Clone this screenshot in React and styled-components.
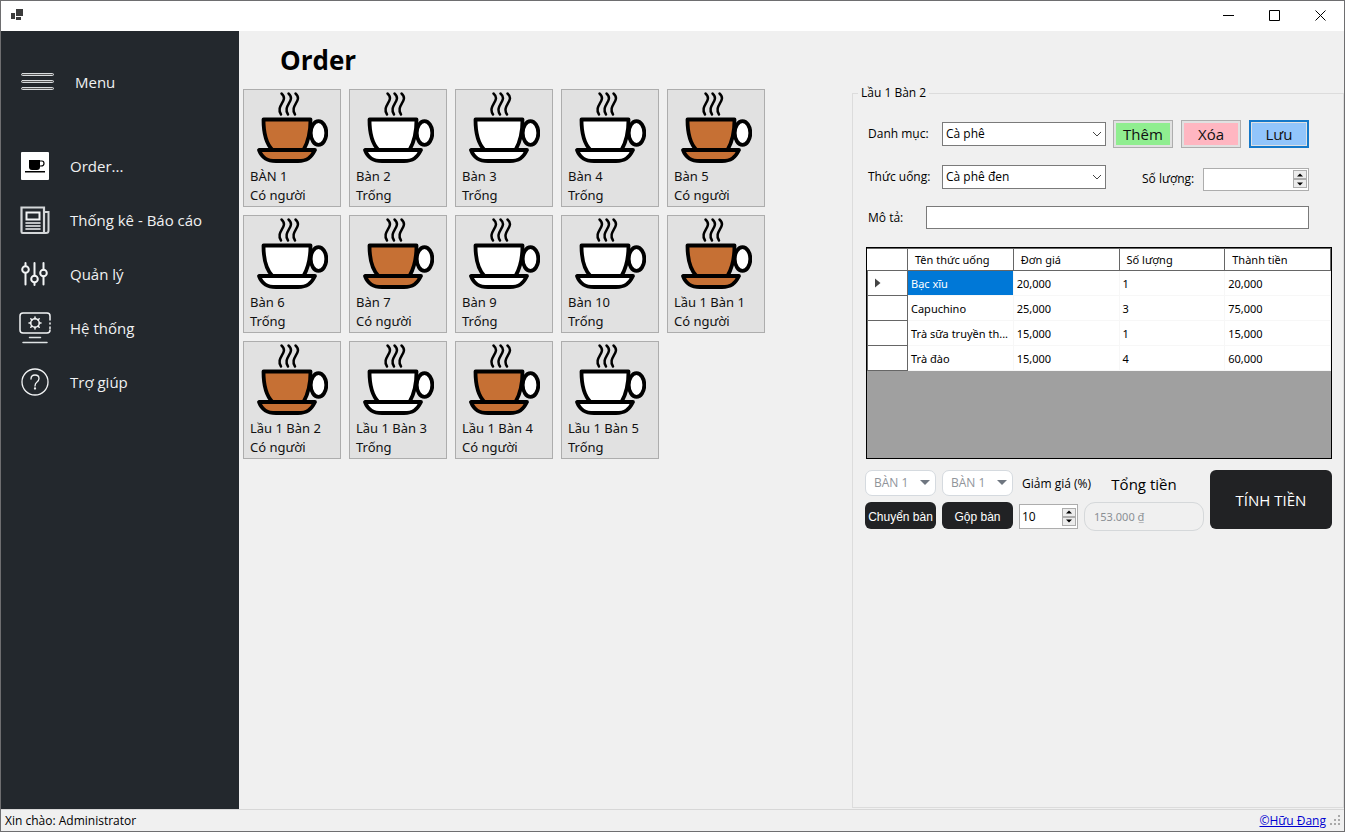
import React from "react";
import styled, { createGlobalStyle, css } from "styled-components";

const Global = createGlobalStyle`
  *, *::before, *::after { box-sizing: border-box; }
  body { margin: 0; background: #f0f0f0; color: #000; font-family: "Open Sans", "Noto Sans", sans-serif; font-size: 12px; }
  button, input, select { font-family: inherit; margin: 0; }
`;

const Window = styled.div`
  display: flex;
  flex-direction: column;
  min-height: 100vh;
  border: 1px solid #6e6e70;
  background: #f0f0f0;
`;

const TitleBar = styled.header`
  display: flex;
  align-items: center;
  justify-content: space-between;
  height: 30px;
  padding-left: 9px;
  background: #fff;
`;

const WindowButtons = styled.div`
  display: flex;
`;

const WindowButton = styled.button`
  display: flex;
  align-items: center;
  justify-content: center;
  width: 46px;
  height: 30px;
  padding: 0 1px 2px 0;
  border: 0;
  background: transparent;
`;

const Body = styled.div`
  display: flex;
  flex: 1;
`;

const Sidebar = styled.nav`
  display: flex;
  flex-direction: column;
  flex: none;
  width: 238px;
  background: #23282d;
`;

const NavButton = styled.button`
  display: flex;
  align-items: center;
  height: ${(p) => (p.$header ? 102 : 54)}px;
  margin-bottom: ${(p) => (p.$header ? 6 : 0)}px;
  padding: 0 0 0 15px;
  gap: ${(p) => (p.$header ? 21 : 16)}px;
  border: 0;
  background: transparent;
  color: #f0f1f2;
  font-size: 15px;
  line-height: 20px;
  svg { width: 38px; height: 38px; flex: none; }
`;

const Main = styled.main`
  flex: 1;
  min-width: 0;
  padding-left: 4px;
`;

const Title = styled.h1`
  height: 58px;
  margin: 0;
  padding-left: 37px;
  font-size: 26px;
  line-height: 58px;
  font-weight: 700;
`;

const TableGrid = styled.div`
  display: flex;
  flex-wrap: wrap;
  gap: 8px;
`;

const TableCard = styled.button`
  display: flex;
  flex-direction: column;
  width: 98px;
  height: 118px;
  padding: 1px 0 0 6px;
  border: 1px solid #adadad;
  background: #e1e1e1;
  text-align: left;
  font-family: "Noto Sans", sans-serif;
  font-size: 13px;
  line-height: 19px;
  color: #111;
  svg { display: block; width: 78px; height: 76px; }
`;

const OrderPanel = styled.fieldset`
  flex: none;
  width: 492px;
  min-width: 0;
  margin: 54px 0 1px;
  padding: 0 0 0 13px;
  border: 1px solid #dcdcdc;
`;

const Legend = styled.legend`
  margin-left: -8px;
  padding: 0 3px;
  line-height: 16px;
`;

const Form = styled.div`
  display: flex;
  flex-direction: column;
  gap: 14px;
  padding: 19px 34px 0 2px;
`;

const FormRow = styled.div`
  display: flex;
  align-items: center;
  height: ${(p) => p.$height}px;
`;

const FieldLabel = styled.label`
  flex: none;
  width: ${(p) => p.$width}px;
  line-height: 18px;
`;

const SelectWrap = styled.div`
  position: relative;
  flex: none;
  width: ${(p) => (p.$round ? 71 : 164)}px;
  svg { position: absolute; right: ${(p) => (p.$round ? 6 : 4)}px; top: 8px; pointer-events: none; }
`;

const Select = styled.select`
  display: block;
  width: 100%;
  height: ${(p) => (p.$round ? 26 : 24)}px;
  padding: 0 ${(p) => (p.$round ? 18 : 20)}px 2px ${(p) => (p.$round ? 8 : 3)}px;
  border: 1px solid ${(p) => (p.$round ? "#d5dadf" : "#7a7a7a")};
  border-radius: ${(p) => (p.$round ? 7 : 0)}px;
  background: #fff;
  color: ${(p) => (p.$round ? "#90949a" : "#000")};
  font-size: 12px;
  opacity: 1;
  appearance: none;
`;

const ActionButtons = styled.div`
  display: flex;
  gap: 8px;
  margin-left: auto;
`;

const ActionButton = styled.button`
  width: 60px;
  height: 28px;
  padding: 0;
  border: ${(p) => (p.$focused ? "2px solid #1478c9" : "1px solid #adadad")};
  box-shadow: inset 0 0 0 ${(p) => (p.$focused ? 1 : 2)}px #e1e1e1;
  background: ${(p) => p.$color};
  color: #111;
  font-size: 15px;
  line-height: 20px;
`;

const QuantityField = styled.div`
  display: flex;
  align-items: center;
  margin-left: auto;
  padding-top: 4px;
`;

const Spinner = styled.div`
  display: flex;
  align-items: center;
  flex: none;
  width: ${(p) => p.$width}px;
  height: ${(p) => p.$height}px;
  padding: 1px;
  border: 1px solid #adadad;
  background: #fff;
`;

const SpinnerInput = styled.input`
  flex: 1;
  min-width: 0;
  height: 18px;
  padding: 0 1px;
  border: 0;
  background: transparent;
  font-size: 12px;
  appearance: textfield;
  &::-webkit-inner-spin-button { appearance: none; margin: 0; }
`;

const SpinnerArrows = styled.div`
  display: flex;
  flex-direction: column;
  width: 14px;
`;

const SpinnerArrow = styled.button`
  display: flex;
  align-items: center;
  justify-content: center;
  width: 14px;
  height: 9px;
  padding: 0;
  border: 1px solid #adadad;
  background: #ececec;
`;

const NoteInput = styled.input`
  flex: 1;
  min-width: 0;
  height: 23px;
  padding: 0 4px;
  border: 1px solid #7a7a7a;
  background: #fff;
  font-size: 12px;
`;

const GridBox = styled.div`
  width: 466px;
  height: 212px;
  margin-top: 18px;
  border: 1px solid #000;
  background: #a0a0a0;
`;

const OrderTable = styled.table`
  width: 100%;
  table-layout: fixed;
  border-collapse: separate;
  border-spacing: 0;
  background: #fff;
  font-family: "Noto Sans", sans-serif;
  font-size: 11px;
  line-height: 16px;
`;

const HeadCell = styled.th`
  height: 23px;
  padding: 0 0 0 7px;
  border: solid #666;
  border-width: 1px 1px 1px 0;
  font-weight: 400;
  text-align: left;
  width: ${(p) => (p.$marker ? "41px" : "auto")};
`;

const RowMarker = styled.th`
  height: 25px;
  padding: 0 0 0 7px;
  border: solid #666;
  border-width: 0 1px 1px 1px;
  svg { display: block; }
`;

const Cell = styled.td`
  height: 25px;
  padding: 1px 0 0 3px;
  border: solid #f7f7f7;
  border-width: 0 1px 1px 0;
  white-space: nowrap;
  ${(p) =>
    p.$selected &&
    css`
      background: #0078d7;
      color: #fff;
    `}
`;

const Checkout = styled.div`
  display: grid;
  grid-template-columns: 71px 71px 59px 120px 122px;
  grid-template-rows: 26px 27px;
  gap: 6px;
  margin: 11px 0 0 -1px;
`;

const DarkButton = styled.button`
  padding: 0;
  border: 0;
  border-radius: 6px;
  background: #212224;
  color: #fff;
  white-space: nowrap;
  font-size: ${(p) => (p.$large ? 15 : 12)}px;
  ${(p) => p.$large ? css`grid-column: 5; grid-row: 1 / 3;` : css`font-family: "Liberation Sans", sans-serif; padding-top: 3px;`}
`;

const CheckoutLabel = styled.label`
  white-space: nowrap;
  padding-left: ${(p) => (p.$large ? 0 : 3)}px;
  text-align: ${(p) => (p.$large ? "center" : "left")};
  font-size: ${(p) => (p.$large ? 15 : 12)}px;
  line-height: 28px;
`;

const DiscountCell = styled.div`
  padding-top: 2px;
`;

const TotalInput = styled.input`
  width: 100%;
  height: 29px;
  padding: 0 9px;
  border: 1px solid #d5d8da;
  border-radius: 11px;
  background: #f0f0f0;
  color: #8a8f94;
  font-family: "Noto Sans", sans-serif;
  font-size: 11px;
`;

const StatusBar = styled.footer`
  display: flex;
  align-items: center;
  justify-content: space-between;
  height: 22px;
  padding: 0 2px 0 4px;
  border-top: 1px solid #d7d7d7;
`;

const StatusRight = styled.div`
  display: flex;
  align-items: center;
  gap: 4px;
`;

const AuthorLink = styled.a`
  color: #0000d0;
  text-decoration: underline;
`;

function AppLogo() {
  return (
    <svg width="16" height="14" viewBox="0 0 16 14" fill="#3b3b3b" aria-hidden="true">
      <rect x="6" y="0" width="7" height="7" />
      <rect x="1" y="4" width="4" height="6" />
      <rect x="6" y="8" width="5" height="3" />
    </svg>
  );
}

const lineIcon = { viewBox: "0 0 38 38", fill: "none", stroke: "#f2f4f5", strokeLinecap: "round", "aria-hidden": true };

const MenuIcon = () => (
  <svg {...lineIcon} stroke="#d8dcde">
    {[11.5, 18.5, 25.5].map((y) => (
      <rect key={y} x="5.5" y={y - 1} width="32" height="2" rx="1" fill="#555" strokeWidth="1" />
    ))}
  </svg>
);
const OrderIcon = () => (
  <svg viewBox="0 0 38 38" aria-hidden="true">
    <rect x="5" y="5" width="28" height="28" rx="1" fill="#fff" />
    <path d="M13 13h11v7q0 3-3 3h-5q-3 0-3-3z" />
    <path d="M24 14h2q2 0 2 2.500t-3 2.500h-1" fill="none" stroke="#000" strokeWidth="1.200" />
    <rect x="9" y="24" width="20" height="1.500" />
  </svg>
);
const ReportIcon = () => (
  <svg {...lineIcon}>
    <path d="M5.500 6.500h22.500v25.500h-21.500q-1 0-1-1.500z" strokeWidth="2.200" stroke="#d4d7d9" />
    <path d="M28.500 11h4v18.500q0 2.500-2.500 2.500h-3" strokeWidth="2" stroke="#d4d7d9" />
    <path d="M10.500 11.500h13v7h-13z" strokeWidth="2" />
    <path d="M10 22h14M10 25h14M10 28h14" strokeWidth="1.600" />
  </svg>
);
const ManageIcon = () => (
  <svg {...lineIcon} strokeWidth="2">
    <path d="M9.500 8v3M9.500 18.500v11M18.500 8v12.500M18.500 28v2M27.500 8v6.500M27.500 21.500v8" />
    <circle cx="9.500" cy="14.500" r="3.300" />
    <circle cx="18.500" cy="24" r="3.300" />
    <circle cx="27.500" cy="18" r="3.300" />
  </svg>
);
const SystemIcon = () => (
  <svg {...lineIcon} strokeWidth="1.500">
    <path d="M34 11V7q0-3-3-3H7Q4 4 4 7v14q0 3 3 3h24q3 0 3-3" />
    <path d="M34 14v1M34 18v1.500" />
    <circle cx="19" cy="14" r="4.300" />
    <path d="M19 8v1.700M19 18.300V20M13 14h1.700M23.300 14H25M14.800 9.800l1.200 1.200M22 17l1.200 1.200M23.200 9.800L22 11M16 17l-1.200 1.200" />
    <path d="M13.500 28.500h11M7 33.500h24" stroke="#dfe3e5" />
  </svg>
);
const HelpIcon = () => (
  <svg {...lineIcon} strokeWidth="1.300">
    <circle cx="19" cy="19" r="13" />
    <path d="M15 16q0-4 4-4t4 3.500q0 2-2 3.500t-2 4" />
    <circle cx="19" cy="25.500" r="0.500" fill="#fff" />
  </svg>
);

function CoffeeCup({ filled }) {
  const color = filled ? "#c67034" : "#fff";
  return (
    <svg viewBox="7 2 78 76" fill="none" stroke="#000" strokeWidth="3.800" strokeLinejoin="round" strokeLinecap="round" aria-hidden="true">
      <path d="M38.500 4.500c8 7-6.500 12-0.500 21M45.500 4.500c8 7-6.500 12-0.500 21M52.500 4.500c8 7-6.500 12-0.500 21" strokeWidth="2.500" />
      <ellipse cx="75.500" cy="44" rx="7.800" ry="11.800" fill="#fff" />
      <path d="M20.500 30.500h47c0 12-2 22-7 30.500H29.500c-6-6-9-18-9-30.500z" fill={color} />
      <path d="M16 61H72c-4 8-8 11-17 11H33c-9 0-14-3-17-11z" fill={color} />
    </svg>
  );
}

function Chevron() {
  return (
    <svg width="10" height="8" viewBox="0 0 10 8" fill="none" stroke="#444" aria-hidden="true">
      <path d="M1 2l4 4 4-4" />
    </svg>
  );
}

function Caret() {
  return (
    <svg width="10" height="8" viewBox="0 0 10 8" fill="#6f7680" aria-hidden="true">
      <path d="M0 2h10L5 7z" />
    </svg>
  );
}

function NumberBox({ id, value, width, height }) {
  return (
    <Spinner $width={width} $height={height}>
      <SpinnerInput id={id} type="number" defaultValue={value} />
      <SpinnerArrows>
        <SpinnerArrow type="button" aria-label="Tăng">
          <svg width="6" height="4" viewBox="0 0 6 4"><path d="M0 3.500h6L3 0.500z" /></svg>
        </SpinnerArrow>
        <SpinnerArrow type="button" aria-label="Giảm">
          <svg width="6" height="4" viewBox="0 0 6 4"><path d="M0 0.500h6L3 3.500z" /></svg>
        </SpinnerArrow>
      </SpinnerArrows>
    </Spinner>
  );
}

const navItems = [
  ["Order...", OrderIcon],
  ["Thống kê - Báo cáo", ReportIcon],
  ["Quản lý", ManageIcon],
  ["Hệ thống", SystemIcon],
  ["Trợ giúp", HelpIcon],
];

const tables = [
  ["BÀN 1", true], ["Bàn 2", false], ["Bàn 3", false], ["Bàn 4", false], ["Bàn 5", true],
  ["Bàn 6", false], ["Bàn 7", true], ["Bàn 9", false], ["Bàn 10", false], ["Lầu 1 Bàn 1", true],
  ["Lầu 1 Bàn 2", true], ["Lầu 1 Bàn 3", false], ["Lầu 1 Bàn 4", true], ["Lầu 1 Bàn 5", false],
];

const orderLines = [
  ["Bạc xĩu", "20,000", "1", "20,000"],
  ["Capuchino", "25,000", "3", "75,000"],
  ["Trà sữa truyền th...", "15,000", "1", "15,000"],
  ["Trà đào", "15,000", "4", "60,000"],
];

export default function App() {
  return (
    <>
      <Global />
      <Window>
        <TitleBar>
          <AppLogo />
          <WindowButtons>
            <WindowButton aria-label="Thu nhỏ">
              <svg width="11" height="11" stroke="#000"><path d="M0 5.500h11" /></svg>
            </WindowButton>
            <WindowButton aria-label="Phóng to">
              <svg width="11" height="11" fill="none" stroke="#000"><path d="M.5 .5h10v10H.5z" /></svg>
            </WindowButton>
            <WindowButton aria-label="Đóng">
              <svg width="11" height="11" stroke="#000"><path d="M.5 .5l10 10M10.500 .5l-10 10" /></svg>
            </WindowButton>
          </WindowButtons>
        </TitleBar>
        <Body>
          <Sidebar>
            <NavButton $header><MenuIcon />Menu</NavButton>
            {navItems.map(([label, Icon]) => (
              <NavButton key={label}><Icon />{label}</NavButton>
            ))}
          </Sidebar>
          <Main>
            <Title>Order</Title>
            <TableGrid>
              {tables.map(([name, busy]) => (
                <TableCard key={name}>
                  <CoffeeCup filled={busy} />
                  <span>{name}</span>
                  <span>{busy ? "Có người" : "Trống"}</span>
                </TableCard>
              ))}
            </TableGrid>
          </Main>
          <OrderPanel>
            <Legend>Lầu 1 Bàn 2</Legend>
            <Form>
              <FormRow $height={28}>
                <FieldLabel $width={74} htmlFor="category">Danh mục:</FieldLabel>
                <SelectWrap>
                  <Select id="category"><option>Cà phê</option></Select>
                  <Chevron />
                </SelectWrap>
                <ActionButtons>
                  <ActionButton $color="#90ee90">Thêm</ActionButton>
                  <ActionButton $color="#ffb6c1">Xóa</ActionButton>
                  <ActionButton $color="#92c5fb" $focused>Lưu</ActionButton>
                </ActionButtons>
              </FormRow>
              <FormRow $height={30}>
                <FieldLabel $width={74} htmlFor="drink">Thức uống:</FieldLabel>
                <SelectWrap>
                  <Select id="drink"><option>Cà phê đen</option></Select>
                  <Chevron />
                </SelectWrap>
                <QuantityField>
                  <FieldLabel $width={61} htmlFor="quantity">Số lượng:</FieldLabel>
                  <NumberBox id="quantity" value="" width={106} height={23} />
                </QuantityField>
              </FormRow>
              <FormRow $height={23}>
                <FieldLabel $width={58} htmlFor="note">Mô tả:</FieldLabel>
                <NoteInput id="note" type="text" />
              </FormRow>
            </Form>
            <GridBox>
              <OrderTable>
                <thead>
                  <tr>
                    <HeadCell $marker aria-label="Dòng" />
                    {["Tên thức uống", "Đơn giá", "Số lượng", "Thành tiền"].map((h) => (
                      <HeadCell key={h}>{h}</HeadCell>
                    ))}
                  </tr>
                </thead>
                <tbody>
                  {orderLines.map((line, r) => (
                    <tr key={line[0]}>
                      <RowMarker>
                        {r === 0 && (
                          <svg width="6" height="10" viewBox="0 0 6 10" fill="#444"><path d="M0 0.500v9L5.500 5z" /></svg>
                        )}
                      </RowMarker>
                      {line.map((value, c) => (
                        <Cell key={c} $selected={r === 0 && c === 0}>{value}</Cell>
                      ))}
                    </tr>
                  ))}
                </tbody>
              </OrderTable>
            </GridBox>
            <Checkout>
              <SelectWrap $round>
                <Select $round disabled aria-label="Bàn chuyển"><option>BÀN 1</option></Select>
                <Caret />
              </SelectWrap>
              <SelectWrap $round>
                <Select $round disabled aria-label="Bàn gộp"><option>BÀN 1</option></Select>
                <Caret />
              </SelectWrap>
              <CheckoutLabel htmlFor="discount">Giảm giá (%)</CheckoutLabel>
              <CheckoutLabel $large htmlFor="total">Tổng tiền</CheckoutLabel>
              <DarkButton $large>TÍNH TIỀN</DarkButton>
              <DarkButton>Chuyển bàn</DarkButton>
              <DarkButton>Gộp bàn</DarkButton>
              <DiscountCell>
                <NumberBox id="discount" value="10" width={59} height={25} />
              </DiscountCell>
              <TotalInput id="total" type="text" disabled defaultValue="153.000 ₫" />
            </Checkout>
          </OrderPanel>
        </Body>
        <StatusBar>
          <span>Xin chào: Administrator</span>
          <StatusRight>
            <AuthorLink href="#author">©Hữu Đang</AuthorLink>
            <svg width="12" height="12" viewBox="0 0 12 12" fill="#a9a9a9" aria-hidden="true">
              <path d="M8 0h2v2h-2zM4 4h2v2h-2zM8 4h2v2h-2zM0 8h2v2h-2zM4 8h2v2h-2zM8 8h2v2h-2z" />
            </svg>
          </StatusRight>
        </StatusBar>
      </Window>
    </>
  );
}
